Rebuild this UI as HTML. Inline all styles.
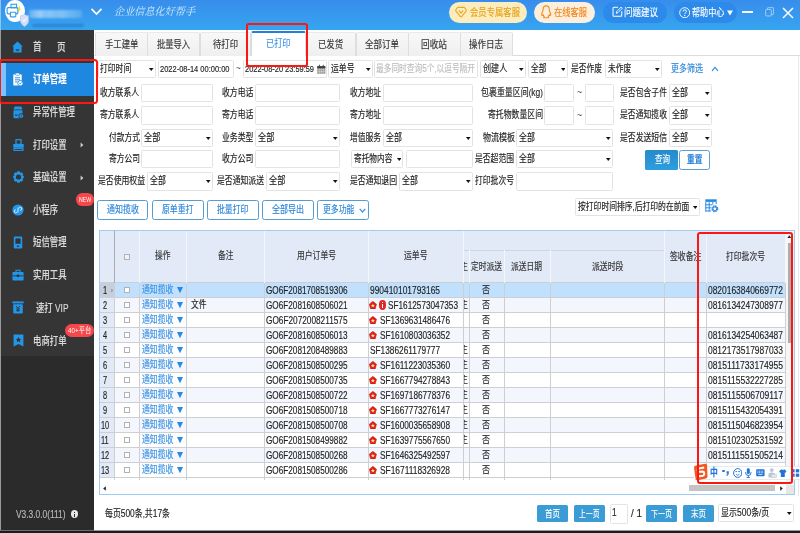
<!DOCTYPE html>
<html lang="zh-CN"><head><meta charset="utf-8"><title>订单管理 - 已打印</title>
<style>
html,body{margin:0;padding:0;}
body{width:800px;height:533px;overflow:hidden;position:relative;background:#fff;font-family:"Liberation Sans", "Noto Sans CJK SC", sans-serif;}
#app{position:absolute;left:0;top:0;width:800px;height:533px;overflow:hidden;}
#app div,#app span,#app svg{position:absolute;box-sizing:border-box;}
.t,.s{white-space:nowrap;transform-origin:0 50%;-webkit-text-stroke:0.15px currentColor;}
.s{font-family:"Liberation Serif","Noto Serif CJK SC",serif;font-style:italic;}
.in{background:#fff;border:1px solid #e3e3e3;border-radius:1.5px;}
</style></head>
<body><div id="app">
<div style="left:0px;top:0px;width:800px;height:29.5px;background:linear-gradient(#388dec,#36a5f0);"></div>
<div style="left:4.5px;top:-0.5px;width:20px;height:22.5px;background:#fff;border-radius:50%;"></div>
<svg style="left:6px;top:3px" width="16" height="15" viewBox="0 0 16 15"><rect x="5" y="1.3" width="5.6" height="3.4" fill="none" stroke="#319de8" stroke-width="1.1"/><rect x="1.1" y="4.7" width="10.8" height="6.2" rx="1.3" fill="none" stroke="#319de8" stroke-width="1.2"/><rect x="4.4" y="9.3" width="5.4" height="4.6" rx="0.6" fill="#fff" stroke="#319de8" stroke-width="1.1"/><path d="M13.2 3.2 L11.6 6.6 H13 L12.2 9.4 L14.8 5.6 H13.4 L14.2 3.2Z" fill="#f7cf2a"/></svg>
<svg style="left:19.5px;top:13.5px" width="9" height="13" viewBox="0 0 9 13"><path d="M4.5 0.4 Q6.6 1.8 8.6 1.8 V7.6 Q8.2 10.4 4.5 12.6 Q0.8 10.4 0.4 7.6 V1.8 Q2.4 1.8 4.5 0.4Z" fill="#d9dff6" stroke="#b9c4ee" stroke-width="0.7"/><path d="M2.6 5.8 L4 7.4 L6.6 4.2" fill="none" stroke="#f4f6fd" stroke-width="1.1"/></svg>
<div style="left:28.5px;top:9.5px;width:53px;height:8px;background:linear-gradient(90deg,#5fb0f2 0,#7cc0f6 8%,#8fc9f8 14%,#a3d2f9 22%,#86c5f7 30%,#92caf8 40%,#7fc1f6 52%,#8ac6f7 62%,#74bbf5 74%,#6ab6f4 86%,#55abf1 100%);filter:blur(0.9px);opacity:.92;"></div>
<div style="left:32px;top:24.3px;width:52px;height:3.2px;background:#2a7fd2;filter:blur(1.1px);border-radius:2px;opacity:.9;"></div>
<div style="left:0px;top:0px;width:1px;height:29.5px;background:#8ec6f5;"></div>
<svg style="left:90px;top:7px" width="13" height="9" viewBox="0 0 13 9"><path d="M1.5 1.8 L6.5 7 L11.5 1.8" fill="none" stroke="#fff" stroke-width="1.7"/></svg>
<span class="s" style="left:114px;top:3.62px;font-size:10.5px;line-height:15.75px;color:#d6e9fc;transform:scaleX(0.9643);-webkit-text-stroke:0;">企业信息化好帮手</span>
<div style="left:449px;top:1.7px;width:78.3px;height:21.2px;background:#fdedbe;border-radius:10.6px;"></div>
<svg style="left:454.5px;top:6px" width="12" height="12" viewBox="0 0 12 12"><path d="M3.2 1.4 H8.8 Q9.4 1.4 9.8 1.9 L11.2 4 Q11.5 4.6 11.1 5.1 L6.6 10.6 Q6 11.2 5.4 10.6 L0.9 5.1 Q0.5 4.6 0.8 4 L2.2 1.9 Q2.6 1.4 3.2 1.4Z" fill="none" stroke="#e9a820" stroke-width="1.1"/><path d="M3.9 4.4 L6 7 L8.1 4.4" fill="none" stroke="#e9a820" stroke-width="1.1"/></svg>
<span class="t" style="left:469.5px;top:4.5px;font-size:10px;line-height:15.0px;color:#e5a21c;transform:scaleX(0.8333);">会员专属客服</span>
<div style="left:534px;top:1.7px;width:61px;height:21.2px;background:#fdefde;border-radius:10.6px;"></div>
<svg style="left:541.3px;top:5.2px" width="10.4" height="13.6" viewBox="0 0 10.4 13.6"><path d="M5.2 0.8 C7.4 0.8 8.3 2.6 8.3 4.6 C8.3 5.8 8.6 6.4 9.2 7.6 C9.9 9 9.9 10.2 9.3 10.4 C8.9 10.5 8.5 10 8.3 9.6 C8.1 10.6 7.7 11.2 7.2 11.7 C7.9 12 8 12.8 7 12.8 H3.4 C2.4 12.8 2.5 12 3.2 11.7 C2.7 11.2 2.3 10.6 2.1 9.6 C1.9 10 1.5 10.5 1.1 10.4 C0.5 10.2 0.5 9 1.2 7.6 C1.8 6.4 2.1 5.8 2.1 4.6 C2.1 2.6 3 0.8 5.2 0.8Z" fill="none" stroke="#f5901e" stroke-width="1.15" stroke-linejoin="round"/></svg>
<span class="t" style="left:554px;top:4.5px;font-size:10px;line-height:15.0px;color:#f08418;transform:scaleX(0.8250);">在线客服</span>
<div style="left:603px;top:1.7px;width:64px;height:21.2px;background:#2b8aea;border-radius:10.6px;"></div>
<svg style="left:612px;top:6.4px" width="11.2" height="11.2" viewBox="0 0 11 11"><path d="M6 1.2 H2 Q1 1.2 1 2.2 V9 Q1 10 2 10 H8.6 Q9.6 10 9.6 9 V5.2" fill="none" stroke="#fff" stroke-width="1"/><path d="M4.2 7.2 L4.6 5.4 L9 1 L10.2 2.2 L5.8 6.6 Z" fill="none" stroke="#fff" stroke-width="0.9"/></svg>
<span class="t" style="left:624px;top:4.5px;font-size:10px;line-height:15.0px;color:#fff;transform:scaleX(0.8500);">问题建议</span>
<div style="left:674px;top:1.7px;width:63px;height:21.2px;background:#2b8aea;border-radius:10.6px;"></div>
<svg style="left:679px;top:6.6px" width="11.4" height="11.4" viewBox="0 0 11.4 11.4"><circle cx="5.7" cy="5.7" r="5" fill="none" stroke="#fff" stroke-width="0.95"/><path d="M4 4.5 Q4 2.9 5.7 2.9 Q7.4 2.9 7.4 4.4 Q7.4 5.3 6.4 5.9 Q5.7 6.3 5.7 7.2" fill="none" stroke="#fff" stroke-width="1"/><rect x="5.2" y="8" width="1" height="1.1" fill="#fff"/></svg>
<span class="t" style="left:692px;top:4.5px;font-size:10px;line-height:15.0px;color:#fff;transform:scaleX(0.8125);">帮助中心</span>
<svg style="left:727px;top:9.5px" width="6" height="6" viewBox="0 0 6 6"><path d="M0 0.5 H6 L3 5.5Z" fill="#fff"/></svg>
<div style="left:742px;top:11.3px;width:11px;height:1.5px;background:#f4f9ff;"></div>
<svg style="left:764.8px;top:7.2px" width="9.4" height="9.8" viewBox="0 0 11 12" preserveAspectRatio="none"><rect x="0.8" y="3" width="6.6" height="8" rx="0.8" fill="none" stroke="#bcdcf9" stroke-width="0.9"/><path d="M3 3 V1.3 Q3 0.8 3.6 0.8 H9.4 Q10 0.8 10 1.3 V8.4 Q10 9 9.4 9 H7.6" fill="none" stroke="#bcdcf9" stroke-width="0.9"/></svg>
<svg style="left:782px;top:6.5px" width="12" height="12" viewBox="0 0 12 12"><path d="M1 1 L11 11 M11 1 L1 11" stroke="#fff" stroke-width="1.5"/></svg>
<div style="left:0px;top:29.5px;width:94.2px;height:501.5px;background:#353535;"></div>
<div style="left:0px;top:355.5px;width:94.2px;height:176px;background:#2b2b2b;"></div>
<div style="left:0px;top:29.5px;width:1px;height:501.5px;background:#9a9a9a;"></div>
<div style="left:1px;top:62.5px;width:93.2px;height:33px;background:#1e88e1;"></div>
<div style="left:1px;top:62.5px;width:4.6px;height:33px;background:#7cc4fd;"></div>
<svg style="left:12px;top:41px" width="11" height="12" viewBox="0 0 11 12"><path d="M5.5 0.6 L10.8 5.4 H9.6 V11.4 H1.4 V5.4 H0.2Z" fill="#2297ea"/><rect x="3.8" y="8.4" width="3.4" height="1.3" fill="#333"/></svg>
<span class="t" style="left:33px;top:38.75px;font-size:11px;line-height:16.5px;color:#dadada;font-weight:500;transform:scaleX(0.7800);">首</span>
<span class="t" style="left:56.5px;top:38.75px;font-size:11px;line-height:16.5px;color:#dadada;font-weight:500;transform:scaleX(0.7800);">页</span>
<svg style="left:12.5px;top:73px" width="10" height="13" viewBox="0 0 10 13"><rect x="0.3" y="1.2" width="8.4" height="11.4" rx="1.2" fill="#fff"/><rect x="2.6" y="0.1" width="3.8" height="2.2" rx="0.6" fill="#fff" stroke="#1e88e1" stroke-width="0.6"/><path d="M2 4.8 H7 M2 6.8 H7 M2 8.8 H4.6" stroke="#1e88e1" stroke-width="0.9"/><circle cx="7.4" cy="10.2" r="2.9" fill="#1e88e1"/><circle cx="7.4" cy="10.2" r="2.2" fill="#fff"/><path d="M6.3 10.2 L7.1 11 L8.5 9.4" stroke="#1e88e1" stroke-width="0.8" fill="none"/></svg>
<span class="t" style="left:33px;top:71.25px;font-size:11px;line-height:16.5px;color:#fff;font-weight:700;transform:scaleX(0.7614);">订单管理</span>
<svg style="left:12.5px;top:106px" width="11" height="13" viewBox="0 0 11 13"><path d="M0.5 3.4 L1.6 0.6 H8.4 L9.5 3.4Z" fill="#2297ea"/><rect x="0.5" y="4.2" width="9" height="8" rx="0.8" fill="#2297ea"/><rect x="2" y="8.2" width="2.6" height="1.8" fill="#333" opacity=".6"/><circle cx="8.2" cy="10" r="2.8" fill="#333"/><circle cx="8.2" cy="10" r="2.1" fill="#2297ea"/><rect x="7.8" y="8.6" width="0.8" height="1.7" fill="#333"/><rect x="7.8" y="10.7" width="0.8" height="0.7" fill="#333"/></svg>
<span class="t" style="left:33px;top:103.75px;font-size:11px;line-height:16.5px;color:#dadada;font-weight:500;transform:scaleX(0.7636);">异常件管理</span>
<svg style="left:12.5px;top:139px" width="11" height="12" viewBox="0 0 11 12"><rect x="3" y="0.7" width="5" height="4.6" fill="none" stroke="#2297ea" stroke-width="1.2"/><rect x="0.2" y="5" width="10.6" height="3.8" rx="0.7" fill="#2297ea"/><rect x="1" y="9.4" width="9" height="2" fill="none" stroke="#2297ea" stroke-width="1.1"/></svg>
<span class="t" style="left:33px;top:136.75px;font-size:11px;line-height:16.5px;color:#dadada;font-weight:500;transform:scaleX(0.7614);">打印设置</span>
<svg style="left:80px;top:142px" width="4" height="6" viewBox="0 0 4 6"><path d="M0.6 0.4 L3.4 3 L0.6 5.6Z" fill="#cfcfcf"/></svg>
<svg style="left:12.5px;top:171px" width="11" height="12" viewBox="0 0 11 12"><path d="M4.3 0.3 H6.7 L7.1 1.8 L8.6 1.2 L10.3 3 L9.5 4.4 L10.8 5 V7 L9.5 7.6 L10.3 9 L8.6 10.8 L7.1 10.2 L6.7 11.7 H4.3 L3.9 10.2 L2.4 10.8 L0.7 9 L1.5 7.6 L0.2 7 V5 L1.5 4.4 L0.7 3 L2.4 1.2 L3.9 1.8Z" fill="#2297ea"/><circle cx="5.5" cy="6" r="2.6" fill="#353535"/></svg>
<span class="t" style="left:33px;top:169.25px;font-size:11px;line-height:16.5px;color:#dadada;font-weight:500;transform:scaleX(0.7614);">基础设置</span>
<svg style="left:80px;top:174.5px" width="4" height="6" viewBox="0 0 4 6"><path d="M0.6 0.4 L3.4 3 L0.6 5.6Z" fill="#cfcfcf"/></svg>
<svg style="left:11.5px;top:204px" width="12" height="12" viewBox="0 0 12 12"><circle cx="6" cy="6" r="5.6" fill="#2297ea"/><path d="M5.2 7.6 A1.5 1.5 0 1 1 3.8 5.8 M6.8 4.4 A1.5 1.5 0 1 1 8.2 6.2 M6 3.6 V8.4" stroke="#e3f2fd" stroke-width="1" fill="none" opacity=".95"/></svg>
<span class="t" style="left:33px;top:201.75px;font-size:11px;line-height:16.5px;color:#dadada;font-weight:500;transform:scaleX(0.7576);">小程序</span>
<div style="left:76px;top:193.3px;width:17.8px;height:12.5px;background:#f8474a;border-radius:6.3px;"></div>
<span class="t" style="left:79px;top:194.1px;font-size:8px;line-height:12.0px;color:#fff;transform:scaleX(0.6427);-webkit-text-stroke:0;">NEW</span>
<svg style="left:13px;top:236px" width="10" height="13" viewBox="0 0 10 13"><rect x="0.8" y="0.5" width="8.4" height="12" rx="1.2" fill="#2297ea"/><rect x="2.4" y="2.4" width="5.2" height="5.4" fill="#333"/><rect x="3.8" y="9.6" width="2.4" height="1.2" fill="#333"/></svg>
<span class="t" style="left:33px;top:234.25px;font-size:11px;line-height:16.5px;color:#dadada;font-weight:500;transform:scaleX(0.7614);">短信管理</span>
<svg style="left:12px;top:268.5px" width="12" height="12" viewBox="0 0 12 12"><rect x="0.4" y="3" width="11.2" height="8.4" rx="1" fill="#2297ea"/><path d="M4 3 V1.2 H8 V3" fill="none" stroke="#2297ea" stroke-width="1.1"/><rect x="0.4" y="6.4" width="11.2" height="0.9" fill="#333"/><rect x="4.8" y="5.6" width="2.4" height="2.4" fill="#333"/></svg>
<span class="t" style="left:33px;top:267.35px;font-size:11px;line-height:16.5px;color:#dadada;font-weight:500;transform:scaleX(0.7614);">实用工具</span>
<svg style="left:12px;top:301px" width="12" height="13" viewBox="0 0 12 13"><rect x="0.4" y="0.4" width="11.2" height="2" fill="#2297ea"/><rect x="1.2" y="3.2" width="9.6" height="9.2" rx="0.8" fill="#2297ea"/><path d="M4 5 L6 7.4 L8 5 M6 7.4 V10.8 M4.2 8 H7.8 M4.2 9.6 H7.8" stroke="#333" stroke-width="0.9" fill="none"/></svg>
<span class="t" style="left:36px;top:299.95px;font-size:11px;line-height:16.5px;color:#dadada;font-weight:500;transform:scaleX(0.7594);">速打 VIP</span>
<svg style="left:12.5px;top:333.8px" width="11" height="13" viewBox="0 0 11 13"><path d="M0.6 0.5 H10.4 V12.4 L5.5 10 L0.6 12.4Z" fill="#2297ea"/><path d="M5.5 3 L6.3 4.8 L8.2 5 L6.8 6.3 L7.2 8.2 L5.5 7.2 L3.8 8.2 L4.2 6.3 L2.8 5 L4.7 4.8Z" fill="#333"/></svg>
<span class="t" style="left:33px;top:332.75px;font-size:11px;line-height:16.5px;color:#dadada;font-weight:500;transform:scaleX(0.7614);">电商打单</span>
<div style="left:65px;top:323.5px;width:28.9px;height:13.2px;background:#f8474a;border-radius:6.6px;"></div>
<span class="t" style="left:67.8px;top:324.9px;font-size:7.6px;line-height:11.4px;color:#fff;transform:scaleX(0.8263);-webkit-text-stroke:0;">40+平台</span>
<span class="t" style="left:16px;top:507.27px;font-size:10.3px;line-height:15.45px;color:#b8b8b8;transform:scaleX(0.8131);">V3.3.0.0(111)</span>
<div style="left:71px;top:510.4px;width:7.4px;height:7.8px;background:#e6e6e6;border-radius:50%;"></div>
<div style="left:74.1px;top:511.8px;width:1.3px;height:1.3px;background:#2b2b2b;"></div>
<div style="left:74.1px;top:513.7px;width:1.3px;height:3.2px;background:#2b2b2b;"></div>
<div style="left:94.2px;top:29.5px;width:705.8px;height:26.5px;background:#fff;border-bottom:1px solid #dcdcdc;"></div>
<div style="left:95px;top:31.5px;width:52.5px;height:24.5px;background:linear-gradient(#f8f8f8,#efefef);border:1px solid #dedede;border-top-color:#e9e9e9;border-bottom:none;border-radius:2px 2px 0 0;"></div>
<span class="t" style="left:104.5px;top:36.73px;font-size:10.5px;line-height:15.75px;color:#333;transform:scaleX(0.7976);">手工建单</span>
<div style="left:147px;top:31.5px;width:53.0px;height:24.5px;background:linear-gradient(#f8f8f8,#efefef);border:1px solid #dedede;border-top-color:#e9e9e9;border-bottom:none;border-radius:2px 2px 0 0;"></div>
<span class="t" style="left:157px;top:36.73px;font-size:10.5px;line-height:15.75px;color:#333;transform:scaleX(0.7857);">批量导入</span>
<div style="left:199.5px;top:31.5px;width:51.0px;height:24.5px;background:linear-gradient(#f8f8f8,#efefef);border:1px solid #dedede;border-top-color:#e9e9e9;border-bottom:none;border-radius:2px 2px 0 0;"></div>
<span class="t" style="left:213px;top:36.73px;font-size:10.5px;line-height:15.75px;color:#333;transform:scaleX(0.7937);">待打印</span>
<div style="left:250.5px;top:31px;width:55px;height:25.2px;background:#fff;border:1px solid #dcdcdc;border-bottom:none;border-top:2.8px solid #2381dc;border-radius:2px 2px 0 0;"></div>
<span class="t" style="left:265.5px;top:35.62px;font-size:10.5px;line-height:15.75px;color:#3b93e6;transform:scaleX(0.7778);">已打印</span>
<div style="left:305px;top:31.5px;width:51.0px;height:24.5px;background:linear-gradient(#f8f8f8,#efefef);border:1px solid #dedede;border-top-color:#e9e9e9;border-bottom:none;border-radius:2px 2px 0 0;"></div>
<span class="t" style="left:317.5px;top:36.73px;font-size:10.5px;line-height:15.75px;color:#333;transform:scaleX(0.7937);">已发货</span>
<div style="left:355.5px;top:31.5px;width:53.0px;height:24.5px;background:linear-gradient(#f8f8f8,#efefef);border:1px solid #dedede;border-top-color:#e9e9e9;border-bottom:none;border-radius:2px 2px 0 0;"></div>
<span class="t" style="left:365px;top:36.73px;font-size:10.5px;line-height:15.75px;color:#333;transform:scaleX(0.8095);">全部订单</span>
<div style="left:408px;top:31.5px;width:52.5px;height:24.5px;background:linear-gradient(#f8f8f8,#efefef);border:1px solid #dedede;border-top-color:#e9e9e9;border-bottom:none;border-radius:2px 2px 0 0;"></div>
<span class="t" style="left:421px;top:36.73px;font-size:10.5px;line-height:15.75px;color:#333;transform:scaleX(0.8254);">回收站</span>
<div style="left:460px;top:31.5px;width:53.0px;height:24.5px;background:linear-gradient(#f8f8f8,#efefef);border:1px solid #dedede;border-top-color:#e9e9e9;border-bottom:none;border-radius:2px 2px 0 0;"></div>
<span class="t" style="left:469px;top:36.73px;font-size:10.5px;line-height:15.75px;color:#333;transform:scaleX(0.8095);">操作日志</span>
<div style="left:797.5px;top:56px;width:1px;height:440px;background:#e9e9e9;"></div>
<div class="in" style="left:98px;top:60px;width:58px;height:18px;"></div>
<span class="t" style="left:99.8px;top:61.85px;font-size:9.8px;line-height:14.7px;color:#222;transform:scaleX(0.7962);">打印时间</span>
<svg style="left:149.0px;top:67.89999999999999px" width="4.5" height="2.8" viewBox="0 0 5 3"><path d="M0.2 0 H4.8 L2.5 3Z" fill="#111" stroke="#111" stroke-width="0.4" stroke-linejoin="round"/></svg>
<div class="in" style="left:158px;top:60px;width:76px;height:18px;"></div>
<span class="t" style="left:159.5px;top:62.3px;font-size:9.6px;line-height:14.4px;color:#222;transform:scaleX(0.7801);">2022-08-14 00:00:00</span>
<span class="t" style="left:236.2px;top:61.27px;font-size:10.3px;line-height:15.45px;color:#555;transform:scaleX(0.8000);-webkit-text-stroke:0;">~</span>
<div class="in" style="left:243px;top:60px;width:83.5px;height:18px;"></div>
<span class="t" style="left:244.5px;top:62.3px;font-size:9.6px;line-height:14.4px;color:#222;transform:scaleX(0.7745);">2022-08-20 23:59:59</span>
<svg style="left:317.3px;top:63.6px" width="8.6" height="10.6" viewBox="0 0 8.6 10.6"><rect x="0.3" y="2.2" width="8" height="8.2" fill="#8e8e8e"/><rect x="0.3" y="2.2" width="8" height="2" fill="#3a3a3a"/><path d="M2.4 0.2 L3.2 2.6 H1.6Z M6.2 0.2 L7 2.6 H5.4Z" fill="#3a3a3a"/><path d="M0.6 5.8 H8 M0.6 7.5 H8 M0.6 9.2 H8 M2.3 4.4 V10.4 M4.3 4.4 V10.4 M6.3 4.4 V10.4" stroke="#dcdcdc" stroke-width="0.55"/></svg>
<div class="in" style="left:328px;top:60px;width:45px;height:18px;"></div>
<span class="t" style="left:330.7px;top:61.85px;font-size:9.8px;line-height:14.7px;color:#222;transform:scaleX(0.7996);">运单号</span>
<svg style="left:366.0px;top:67.89999999999999px" width="4.5" height="2.8" viewBox="0 0 5 3"><path d="M0.2 0 H4.8 L2.5 3Z" fill="#111" stroke="#111" stroke-width="0.4" stroke-linejoin="round"/></svg>
<div class="in" style="left:374px;top:60px;width:104px;height:18px;"></div>
<span class="t" style="left:376px;top:61.85px;font-size:9.8px;line-height:14.7px;color:#bdbdbd;transform:scaleX(0.7849);">最多同时查询<span style="position:static;font-size:1.07em">5</span>个,以逗号隔开</span>
<div class="in" style="left:480px;top:60px;width:46px;height:18px;"></div>
<span class="t" style="left:482.7px;top:61.85px;font-size:9.8px;line-height:14.7px;color:#222;transform:scaleX(0.8268);">创建人</span>
<svg style="left:519.0px;top:67.89999999999999px" width="4.5" height="2.8" viewBox="0 0 5 3"><path d="M0.2 0 H4.8 L2.5 3Z" fill="#111" stroke="#111" stroke-width="0.4" stroke-linejoin="round"/></svg>
<div class="in" style="left:528px;top:60px;width:39.5px;height:18px;"></div>
<span class="t" style="left:530.7px;top:61.85px;font-size:9.8px;line-height:14.7px;color:#222;transform:scaleX(0.7809);">全部</span>
<svg style="left:560.5px;top:67.89999999999999px" width="4.5" height="2.8" viewBox="0 0 5 3"><path d="M0.2 0 H4.8 L2.5 3Z" fill="#111" stroke="#111" stroke-width="0.4" stroke-linejoin="round"/></svg>
<span class="t" style="left:571px;top:61.85px;font-size:9.8px;line-height:14.7px;color:#222;transform:scaleX(0.7911);">是否作废</span>
<div class="in" style="left:605px;top:60px;width:57px;height:18px;"></div>
<span class="t" style="left:607.7px;top:61.85px;font-size:9.8px;line-height:14.7px;color:#222;transform:scaleX(0.7928);">未作废</span>
<svg style="left:655.0px;top:67.89999999999999px" width="4.5" height="2.8" viewBox="0 0 5 3"><path d="M0.2 0 H4.8 L2.5 3Z" fill="#111" stroke="#111" stroke-width="0.4" stroke-linejoin="round"/></svg>
<span class="t" style="left:671px;top:61.85px;font-size:9.8px;line-height:14.7px;color:#2b86d9;transform:scaleX(0.8166);">更多筛选</span>
<svg style="left:710.5px;top:66px" width="8" height="6" viewBox="0 0 8 6"><path d="M1 4.8 L4 1.4 L7 4.8" fill="none" stroke="#2b86d9" stroke-width="1.1"/></svg>
<span class="t" style="left:100px;top:85.85px;font-size:9.8px;line-height:14.7px;color:#222;transform:scaleX(0.7962);">收方联系人</span>
<div class="in" style="left:141px;top:84px;width:72px;height:18px;"></div>
<span class="t" style="left:222px;top:85.85px;font-size:9.8px;line-height:14.7px;color:#222;transform:scaleX(0.8038);">收方电话</span>
<div class="in" style="left:255px;top:84px;width:85px;height:18px;"></div>
<span class="t" style="left:350px;top:85.85px;font-size:9.8px;line-height:14.7px;color:#222;transform:scaleX(0.7911);">收方地址</span>
<div class="in" style="left:383px;top:84px;width:90px;height:18px;"></div>
<span class="t" style="left:480.5px;top:85.85px;font-size:9.8px;line-height:14.7px;color:#222;transform:scaleX(0.8118);">包裹重量区间(<span style="position:static;font-size:1.07em">kg</span>)</span>
<div class="in" style="left:544px;top:84px;width:30px;height:18px;"></div>
<span class="t" style="left:577px;top:85.48px;font-size:10.3px;line-height:15.45px;color:#555;transform:scaleX(0.8500);-webkit-text-stroke:0;">~</span>
<div class="in" style="left:585px;top:84px;width:29px;height:18px;"></div>
<span class="t" style="left:620px;top:85.85px;font-size:9.8px;line-height:14.7px;color:#222;transform:scaleX(0.7996);">是否包含子件</span>
<div class="in" style="left:669px;top:84px;width:43px;height:18px;"></div>
<span class="t" style="left:671.7px;top:85.85px;font-size:9.8px;line-height:14.7px;color:#222;transform:scaleX(0.8064);">全部</span>
<svg style="left:705.0px;top:91.89999999999999px" width="4.5" height="2.8" viewBox="0 0 5 3"><path d="M0.2 0 H4.8 L2.5 3Z" fill="#111" stroke="#111" stroke-width="0.4" stroke-linejoin="round"/></svg>
<span class="t" style="left:100px;top:108.35px;font-size:9.8px;line-height:14.7px;color:#222;transform:scaleX(0.7962);">寄方联系人</span>
<div class="in" style="left:141px;top:106px;width:72px;height:19px;"></div>
<span class="t" style="left:222px;top:108.35px;font-size:9.8px;line-height:14.7px;color:#222;transform:scaleX(0.8038);">寄方电话</span>
<div class="in" style="left:255px;top:106px;width:85px;height:19px;"></div>
<span class="t" style="left:350px;top:108.35px;font-size:9.8px;line-height:14.7px;color:#222;transform:scaleX(0.7911);">寄方地址</span>
<div class="in" style="left:383px;top:106px;width:90px;height:19px;"></div>
<span class="t" style="left:487.5px;top:108.35px;font-size:9.8px;line-height:14.7px;color:#222;transform:scaleX(0.8020);">寄托物数量区间</span>
<div class="in" style="left:544px;top:106px;width:30px;height:19px;"></div>
<span class="t" style="left:577px;top:107.98px;font-size:10.3px;line-height:15.45px;color:#555;transform:scaleX(0.8500);-webkit-text-stroke:0;">~</span>
<div class="in" style="left:585px;top:106px;width:29px;height:19px;"></div>
<span class="t" style="left:620px;top:108.35px;font-size:9.8px;line-height:14.7px;color:#222;transform:scaleX(0.7996);">是否通知揽收</span>
<div class="in" style="left:669px;top:106px;width:43px;height:19px;"></div>
<span class="t" style="left:671.7px;top:108.35px;font-size:9.8px;line-height:14.7px;color:#222;transform:scaleX(0.8064);">全部</span>
<svg style="left:705.0px;top:114.39999999999999px" width="4.5" height="2.8" viewBox="0 0 5 3"><path d="M0.2 0 H4.8 L2.5 3Z" fill="#111" stroke="#111" stroke-width="0.4" stroke-linejoin="round"/></svg>
<span class="t" style="left:108.5px;top:130.85px;font-size:9.8px;line-height:14.7px;color:#222;transform:scaleX(0.7911);">付款方式</span>
<div class="in" style="left:141px;top:129px;width:72px;height:18px;"></div>
<span class="t" style="left:143.7px;top:130.85px;font-size:9.8px;line-height:14.7px;color:#222;transform:scaleX(0.8319);">全部</span>
<svg style="left:206.0px;top:136.9px" width="4.5" height="2.8" viewBox="0 0 5 3"><path d="M0.2 0 H4.8 L2.5 3Z" fill="#111" stroke="#111" stroke-width="0.4" stroke-linejoin="round"/></svg>
<span class="t" style="left:222px;top:130.85px;font-size:9.8px;line-height:14.7px;color:#222;transform:scaleX(0.8038);">业务类型</span>
<div class="in" style="left:255px;top:129px;width:85px;height:18px;"></div>
<span class="t" style="left:257.7px;top:130.85px;font-size:9.8px;line-height:14.7px;color:#222;transform:scaleX(0.8319);">全部</span>
<svg style="left:333.0px;top:136.9px" width="4.5" height="2.8" viewBox="0 0 5 3"><path d="M0.2 0 H4.8 L2.5 3Z" fill="#111" stroke="#111" stroke-width="0.4" stroke-linejoin="round"/></svg>
<span class="t" style="left:350px;top:130.85px;font-size:9.8px;line-height:14.7px;color:#222;transform:scaleX(0.7911);">增值服务</span>
<div class="in" style="left:383px;top:129px;width:90px;height:18px;"></div>
<span class="t" style="left:385.7px;top:130.85px;font-size:9.8px;line-height:14.7px;color:#222;transform:scaleX(0.8064);">全部</span>
<svg style="left:466.0px;top:136.9px" width="4.5" height="2.8" viewBox="0 0 5 3"><path d="M0.2 0 H4.8 L2.5 3Z" fill="#111" stroke="#111" stroke-width="0.4" stroke-linejoin="round"/></svg>
<span class="t" style="left:482.5px;top:130.85px;font-size:9.8px;line-height:14.7px;color:#222;transform:scaleX(0.8166);">物流模板</span>
<div class="in" style="left:516px;top:129px;width:97px;height:18px;"></div>
<span class="t" style="left:518.7px;top:130.85px;font-size:9.8px;line-height:14.7px;color:#222;transform:scaleX(0.8064);">全部</span>
<svg style="left:606.0px;top:136.9px" width="4.5" height="2.8" viewBox="0 0 5 3"><path d="M0.2 0 H4.8 L2.5 3Z" fill="#111" stroke="#111" stroke-width="0.4" stroke-linejoin="round"/></svg>
<span class="t" style="left:620px;top:130.85px;font-size:9.8px;line-height:14.7px;color:#222;transform:scaleX(0.7996);">是否发送短信</span>
<div class="in" style="left:669px;top:129px;width:43px;height:18px;"></div>
<span class="t" style="left:671.7px;top:130.85px;font-size:9.8px;line-height:14.7px;color:#222;transform:scaleX(0.8064);">全部</span>
<svg style="left:705.0px;top:136.9px" width="4.5" height="2.8" viewBox="0 0 5 3"><path d="M0.2 0 H4.8 L2.5 3Z" fill="#111" stroke="#111" stroke-width="0.4" stroke-linejoin="round"/></svg>
<span class="t" style="left:108.5px;top:151.85px;font-size:9.8px;line-height:14.7px;color:#222;transform:scaleX(0.7911);">寄方公司</span>
<div class="in" style="left:141px;top:150px;width:72px;height:18px;"></div>
<span class="t" style="left:222px;top:151.85px;font-size:9.8px;line-height:14.7px;color:#222;transform:scaleX(0.8038);">收方公司</span>
<div class="in" style="left:255px;top:150px;width:85px;height:18px;"></div>
<div class="in" style="left:351px;top:150px;width:52px;height:18px;"></div>
<span class="t" style="left:353.7px;top:151.85px;font-size:9.8px;line-height:14.7px;color:#222;transform:scaleX(0.7819);">寄托物内容</span>
<svg style="left:396.8px;top:157.9px" width="4.5" height="2.8" viewBox="0 0 5 3"><path d="M0.2 0 H4.8 L2.5 3Z" fill="#111" stroke="#111" stroke-width="0.4" stroke-linejoin="round"/></svg>
<div class="in" style="left:406px;top:150px;width:67px;height:18px;"></div>
<span class="t" style="left:475px;top:151.85px;font-size:9.8px;line-height:14.7px;color:#222;transform:scaleX(0.7962);">是否超范围</span>
<div class="in" style="left:516px;top:150px;width:97px;height:18px;"></div>
<span class="t" style="left:518.7px;top:151.85px;font-size:9.8px;line-height:14.7px;color:#222;transform:scaleX(0.8064);">全部</span>
<svg style="left:606.0px;top:157.9px" width="4.5" height="2.8" viewBox="0 0 5 3"><path d="M0.2 0 H4.8 L2.5 3Z" fill="#111" stroke="#111" stroke-width="0.4" stroke-linejoin="round"/></svg>
<div style="left:645px;top:150px;width:33px;height:19.5px;background:linear-gradient(#2889c9,#2c9fe0);border-radius:1.5px;"></div>
<span class="t" style="left:655px;top:152.65px;font-size:9.8px;line-height:14.7px;color:#fff;transform:scaleX(0.7656);">查询</span>
<div style="left:679px;top:150px;width:31px;height:19.5px;background:#fff;border:1.6px solid #5a9fcf;border-radius:2.5px;"></div>
<span class="t" style="left:687.2px;top:152.65px;font-size:9.8px;line-height:14.7px;color:#2b86d9;font-weight:700;transform:scaleX(0.7860);">重置</span>
<span class="t" style="left:98px;top:174.25px;font-size:9.8px;line-height:14.7px;color:#222;transform:scaleX(0.7996);">是否使用权益</span>
<div class="in" style="left:147px;top:172px;width:66px;height:19px;"></div>
<span class="t" style="left:149.7px;top:174.35px;font-size:9.8px;line-height:14.7px;color:#222;transform:scaleX(0.8064);">全部</span>
<svg style="left:206.0px;top:180.4px" width="4.5" height="2.8" viewBox="0 0 5 3"><path d="M0.2 0 H4.8 L2.5 3Z" fill="#111" stroke="#111" stroke-width="0.4" stroke-linejoin="round"/></svg>
<span class="t" style="left:217px;top:174.25px;font-size:9.8px;line-height:14.7px;color:#222;transform:scaleX(0.7996);">是否通知派送</span>
<div class="in" style="left:266px;top:172px;width:74px;height:19px;"></div>
<span class="t" style="left:268.7px;top:174.35px;font-size:9.8px;line-height:14.7px;color:#222;transform:scaleX(0.8319);">全部</span>
<svg style="left:333.0px;top:180.4px" width="4.5" height="2.8" viewBox="0 0 5 3"><path d="M0.2 0 H4.8 L2.5 3Z" fill="#111" stroke="#111" stroke-width="0.4" stroke-linejoin="round"/></svg>
<span class="t" style="left:350px;top:174.25px;font-size:9.8px;line-height:14.7px;color:#222;transform:scaleX(0.7996);">是否通知退回</span>
<div class="in" style="left:399px;top:172px;width:74px;height:19px;"></div>
<span class="t" style="left:401.7px;top:174.35px;font-size:9.8px;line-height:14.7px;color:#222;transform:scaleX(0.8064);">全部</span>
<svg style="left:466.0px;top:180.4px" width="4.5" height="2.8" viewBox="0 0 5 3"><path d="M0.2 0 H4.8 L2.5 3Z" fill="#111" stroke="#111" stroke-width="0.4" stroke-linejoin="round"/></svg>
<span class="t" style="left:475px;top:174.25px;font-size:9.8px;line-height:14.7px;color:#222;transform:scaleX(0.7962);">打印批次号</span>
<div class="in" style="left:516px;top:172px;width:97px;height:19px;"></div>
<div style="left:96.5px;top:200px;width:51.5px;height:20px;background:#fff;border:1.4px solid #559cd2;border-radius:2.5px;"></div>
<span class="t" style="left:106.5px;top:202.85px;font-size:9.8px;line-height:14.7px;color:#2b86d9;transform:scaleX(0.8166);">通知揽收</span>
<div style="left:151.5px;top:200px;width:52.0px;height:20px;background:#fff;border:1.4px solid #559cd2;border-radius:2.5px;"></div>
<span class="t" style="left:161.5px;top:202.85px;font-size:9.8px;line-height:14.7px;color:#2b86d9;transform:scaleX(0.8038);">原单重打</span>
<div style="left:207px;top:200px;width:51.5px;height:20px;background:#fff;border:1.4px solid #559cd2;border-radius:2.5px;"></div>
<span class="t" style="left:217px;top:202.85px;font-size:9.8px;line-height:14.7px;color:#2b86d9;transform:scaleX(0.8038);">批量打印</span>
<div style="left:262px;top:200px;width:52px;height:20px;background:#fff;border:1.4px solid #559cd2;border-radius:2.5px;"></div>
<span class="t" style="left:272px;top:202.85px;font-size:9.8px;line-height:14.7px;color:#2b86d9;transform:scaleX(0.8166);">全部导出</span>
<div style="left:317px;top:200px;width:52px;height:20px;background:#fff;border:1.4px solid #559cd2;border-radius:2.5px;"></div>
<span class="t" style="left:322.5px;top:202.85px;font-size:9.8px;line-height:14.7px;color:#2b86d9;transform:scaleX(0.8038);">更多功能</span>
<svg style="left:358.7px;top:207.8px" width="7" height="5" viewBox="0 0 7 5"><path d="M0.7 0.8 L3.5 4 L6.3 0.8" fill="none" stroke="#3b93e6" stroke-width="1.25"/></svg>
<div class="in" style="left:575px;top:198px;width:125px;height:18px;"></div>
<span class="t" style="left:577.7px;top:199.85px;font-size:9.8px;line-height:14.7px;color:#222;transform:scaleX(0.7956);">按打印时间排序,后打印的在前面</span>
<svg style="left:692.8px;top:205.9px" width="4.5" height="2.8" viewBox="0 0 5 3"><path d="M0.2 0 H4.8 L2.5 3Z" fill="#111" stroke="#111" stroke-width="0.4" stroke-linejoin="round"/></svg>
<svg style="left:705px;top:198.7px" width="14" height="14" viewBox="0 0 14 14"><rect x="0.3" y="0.3" width="11.4" height="2.6" fill="#2a8ae0"/><path d="M0.8 3 V12.4 M4.2 3 V12.4 M0.3 5.8 H7.4 M0.3 8.8 H6 M0.3 12 H6 M7.8 3 V5.4 M11.2 3 V5" stroke="#2a8ae0" stroke-width="1"/><circle cx="9.8" cy="9.8" r="2.6" fill="none" stroke="#2a8ae0" stroke-width="1.8" stroke-dasharray="1.4 0.65"/><circle cx="9.8" cy="9.8" r="1.9" fill="none" stroke="#2a8ae0" stroke-width="1"/></svg>
<div style="left:99px;top:230px;width:696px;height:265px;background:#fff;border:1px solid #9ecbf3;"></div>
<div style="left:100px;top:231px;width:694px;height:51.5px;background:#e2eaf8;"></div>
<div style="left:100px;top:282.5px;width:685.5px;height:15px;background:#c1e0fd;"></div>
<div style="left:100px;top:282.5px;width:14.5px;height:15px;background:#c6cfdb;"></div>
<div style="left:100px;top:297.5px;width:685.5px;height:15px;background:#f3f6fc;"></div>
<div style="left:100px;top:297.5px;width:14.5px;height:15px;background:#e2eaf8;"></div>
<div style="left:100px;top:312.5px;width:14.5px;height:15px;background:#e2eaf8;"></div>
<div style="left:100px;top:327.5px;width:685.5px;height:15px;background:#f3f6fc;"></div>
<div style="left:100px;top:327.5px;width:14.5px;height:15px;background:#e2eaf8;"></div>
<div style="left:100px;top:342.5px;width:14.5px;height:15px;background:#e2eaf8;"></div>
<div style="left:100px;top:357.5px;width:685.5px;height:15px;background:#f3f6fc;"></div>
<div style="left:100px;top:357.5px;width:14.5px;height:15px;background:#e2eaf8;"></div>
<div style="left:100px;top:372.5px;width:14.5px;height:15px;background:#e2eaf8;"></div>
<div style="left:100px;top:387.5px;width:685.5px;height:15px;background:#f3f6fc;"></div>
<div style="left:100px;top:387.5px;width:14.5px;height:15px;background:#e2eaf8;"></div>
<div style="left:100px;top:402.5px;width:14.5px;height:15px;background:#e2eaf8;"></div>
<div style="left:100px;top:417.5px;width:685.5px;height:15px;background:#f3f6fc;"></div>
<div style="left:100px;top:417.5px;width:14.5px;height:15px;background:#e2eaf8;"></div>
<div style="left:100px;top:432.5px;width:14.5px;height:15px;background:#e2eaf8;"></div>
<div style="left:100px;top:447.5px;width:685.5px;height:15px;background:#f3f6fc;"></div>
<div style="left:100px;top:447.5px;width:14.5px;height:15px;background:#e2eaf8;"></div>
<div style="left:100px;top:462.5px;width:14.5px;height:15px;background:#e2eaf8;"></div>
<div style="left:100px;top:282.0px;width:685.5px;height:1px;background:#cdcfd2;"></div>
<div style="left:100px;top:297.0px;width:685.5px;height:1px;background:#cdcfd2;"></div>
<div style="left:100px;top:312.0px;width:685.5px;height:1px;background:#cdcfd2;"></div>
<div style="left:100px;top:327.0px;width:685.5px;height:1px;background:#cdcfd2;"></div>
<div style="left:100px;top:342.0px;width:685.5px;height:1px;background:#cdcfd2;"></div>
<div style="left:100px;top:357.0px;width:685.5px;height:1px;background:#cdcfd2;"></div>
<div style="left:100px;top:372.0px;width:685.5px;height:1px;background:#cdcfd2;"></div>
<div style="left:100px;top:387.0px;width:685.5px;height:1px;background:#cdcfd2;"></div>
<div style="left:100px;top:402.0px;width:685.5px;height:1px;background:#cdcfd2;"></div>
<div style="left:100px;top:417.0px;width:685.5px;height:1px;background:#cdcfd2;"></div>
<div style="left:100px;top:432.0px;width:685.5px;height:1px;background:#cdcfd2;"></div>
<div style="left:100px;top:447.0px;width:685.5px;height:1px;background:#cdcfd2;"></div>
<div style="left:100px;top:462.0px;width:685.5px;height:1px;background:#cdcfd2;"></div>
<div style="left:100px;top:477.0px;width:685.5px;height:1px;background:#cdcfd2;"></div>
<div style="left:463px;top:250px;width:201.5px;height:1px;background:#cfd5de;"></div>
<div style="left:114.0px;top:231px;width:1px;height:51.5px;background:#a9adb3;"></div>
<div style="left:114.0px;top:282.5px;width:1px;height:197.5px;background:#cdcfd2;"></div>
<div style="left:138.5px;top:231px;width:1px;height:51.5px;background:#f3f6fb;"></div>
<div style="left:138.5px;top:282.5px;width:1px;height:197.5px;background:#cdcfd2;"></div>
<div style="left:186.0px;top:231px;width:1px;height:51.5px;background:#f3f6fb;"></div>
<div style="left:186.0px;top:282.5px;width:1px;height:197.5px;background:#cdcfd2;"></div>
<div style="left:264.0px;top:231px;width:1px;height:51.5px;background:#f3f6fb;"></div>
<div style="left:264.0px;top:282.5px;width:1px;height:197.5px;background:#cdcfd2;"></div>
<div style="left:367.5px;top:231px;width:1px;height:51.5px;background:#f3f6fb;"></div>
<div style="left:367.5px;top:282.5px;width:1px;height:197.5px;background:#cdcfd2;"></div>
<div style="left:463.0px;top:231px;width:1px;height:51.5px;background:#f3f6fb;"></div>
<div style="left:463.0px;top:282.5px;width:1px;height:197.5px;background:#cdcfd2;"></div>
<div style="left:469.0px;top:250px;width:1px;height:32.5px;background:#f3f6fb;"></div>
<div style="left:469.0px;top:282.5px;width:1px;height:197.5px;background:#cdcfd2;"></div>
<div style="left:503.5px;top:250px;width:1px;height:32.5px;background:#f3f6fb;"></div>
<div style="left:503.5px;top:282.5px;width:1px;height:197.5px;background:#cdcfd2;"></div>
<div style="left:549.5px;top:250px;width:1px;height:32.5px;background:#f3f6fb;"></div>
<div style="left:549.5px;top:282.5px;width:1px;height:197.5px;background:#cdcfd2;"></div>
<div style="left:664.0px;top:231px;width:1px;height:51.5px;background:#f3f6fb;"></div>
<div style="left:664.0px;top:282.5px;width:1px;height:197.5px;background:#cdcfd2;"></div>
<div style="left:705.5px;top:231px;width:1px;height:51.5px;background:#f3f6fb;"></div>
<div style="left:705.5px;top:282.5px;width:1px;height:197.5px;background:#cdcfd2;"></div>
<div style="left:785.0px;top:231px;width:1px;height:51.5px;background:#f3f6fb;"></div>
<div style="left:785.0px;top:282.5px;width:1px;height:197.5px;background:#cdcfd2;"></div>
<div style="left:124px;top:254px;width:6px;height:6px;background:#f2f2f2;border:1px solid #b2b2b2;"></div>
<span class="t" style="left:155px;top:248.95px;font-size:9.8px;line-height:14.7px;color:#333;transform:scaleX(0.7911);">操作</span>
<span class="t" style="left:218px;top:248.95px;font-size:9.8px;line-height:14.7px;color:#333;transform:scaleX(0.7911);">备注</span>
<span class="t" style="left:297px;top:248.95px;font-size:9.8px;line-height:14.7px;color:#333;transform:scaleX(0.7962);">用户订单号</span>
<span class="t" style="left:404px;top:248.95px;font-size:9.8px;line-height:14.7px;color:#333;transform:scaleX(0.7996);">运单号</span>
<span class="t" style="left:470.5px;top:260.45px;font-size:9.8px;line-height:14.7px;color:#333;transform:scaleX(0.7911);">定时派送</span>
<span class="t" style="left:511px;top:260.45px;font-size:9.8px;line-height:14.7px;color:#333;transform:scaleX(0.7911);">派送日期</span>
<span class="t" style="left:592px;top:260.45px;font-size:9.8px;line-height:14.7px;color:#333;transform:scaleX(0.8038);">派送时段</span>
<span class="t" style="left:670px;top:249.95px;font-size:9.8px;line-height:14.7px;color:#333;transform:scaleX(0.8038);">签收备注</span>
<span class="t" style="left:726px;top:249.95px;font-size:9.8px;line-height:14.7px;color:#333;transform:scaleX(0.7962);">打印批次号</span>
<span class="t" style="left:103.2px;top:283.1px;font-size:10px;line-height:15.0px;color:#222;transform:scaleX(0.7400);">1</span>
<svg style="left:110.8px;top:287.7px" width="2.6" height="5" viewBox="0 0 3 5"><path d="M0.3 0.3 L2.7 2.5 L0.3 4.7Z" fill="#8c98a8"/></svg>
<div style="left:124px;top:287px;width:6px;height:6px;background:#fff;border:1px solid #b2b2b2;"></div>
<span class="t" style="left:142px;top:283.05px;font-size:9.8px;line-height:14.7px;color:#3b93e6;transform:scaleX(0.8038);">通知揽收</span>
<svg style="left:176.8px;top:287.4px" width="6" height="6.2" viewBox="0 0 7 6.5" preserveAspectRatio="none"><path d="M0 0 H7 L3.5 6.5Z" fill="#2a8ae0"/></svg>
<span class="t" style="left:266px;top:282.67px;font-size:10.3px;line-height:15.45px;color:#222;transform:scaleX(0.7952);">GO6F2081708519306</span>
<span class="t" style="left:370px;top:282.67px;font-size:10.3px;line-height:15.45px;color:#222;transform:scaleX(0.8148);">990410101793165</span>
<span class="t" style="left:482px;top:283.72px;font-size:9.3px;line-height:13.95px;color:#222;transform:scaleX(0.8591);">否</span>
<span class="t" style="left:708px;top:282.67px;font-size:10.3px;line-height:15.45px;color:#222;transform:scaleX(0.8184);">0820163840669772</span>
<span class="t" style="left:103.2px;top:298.1px;font-size:10px;line-height:15.0px;color:#222;transform:scaleX(0.7400);">2</span>
<div style="left:124px;top:302px;width:6px;height:6px;background:#fff;border:1px solid #b2b2b2;"></div>
<span class="t" style="left:142px;top:298.05px;font-size:9.8px;line-height:14.7px;color:#3b93e6;transform:scaleX(0.8038);">通知揽收</span>
<svg style="left:176.8px;top:302.4px" width="6" height="6.2" viewBox="0 0 7 6.5" preserveAspectRatio="none"><path d="M0 0 H7 L3.5 6.5Z" fill="#2a8ae0"/></svg>
<span class="t" style="left:190.5px;top:298.05px;font-size:9.8px;line-height:14.7px;color:#222;transform:scaleX(0.7911);">文件</span>
<span class="t" style="left:266px;top:297.67px;font-size:10.3px;line-height:15.45px;color:#222;transform:scaleX(0.7952);">GO6F2081608506021</span>
<svg style="left:369.2px;top:300.8px" width="7.8" height="8.5" viewBox="0 0 8.4 9"><path d="M4.2 0.3 L8.1 3.3 L6.7 8.6 H1.7 L0.3 3.3Z" fill="#de1f1a" stroke="#c9140f" stroke-width="0.5" stroke-linejoin="round"/><path d="M4.2 2.6 L4.85 4.1 L6.4 4.2 L5.2 5.2 L5.6 6.8 L4.2 5.9 L2.8 6.8 L3.2 5.2 L2 4.2 L3.55 4.1Z" fill="#f7e38a"/></svg>
<div style="left:378.5px;top:300.09999999999997px;width:7.7px;height:9.7px;background:#e0261f;border-radius:50%;"></div>
<div style="left:381.8px;top:302.0px;width:1.2px;height:1.4px;background:#fff;"></div>
<div style="left:381.8px;top:304.2px;width:1.2px;height:4px;background:#fff;"></div>
<span class="t" style="left:387.5px;top:297.67px;font-size:10.3px;line-height:15.45px;color:#222;transform:scaleX(0.7990);">SF1612573047353</span>
<div style="left:463.5px;top:298.5px;width:5.5px;height:13px;overflow:hidden;"><span class="t" style="left:-4px;top:-0.5px;font-size:10.3px;line-height:14px;color:#222;transform:scaleX(.775);">主</span></div>
<span class="t" style="left:482px;top:298.72px;font-size:9.3px;line-height:13.95px;color:#222;transform:scaleX(0.8591);">否</span>
<span class="t" style="left:708px;top:297.67px;font-size:10.3px;line-height:15.45px;color:#222;transform:scaleX(0.8184);">0816134247308977</span>
<span class="t" style="left:103.2px;top:313.1px;font-size:10px;line-height:15.0px;color:#222;transform:scaleX(0.7400);">3</span>
<div style="left:124px;top:317px;width:6px;height:6px;background:#fff;border:1px solid #b2b2b2;"></div>
<span class="t" style="left:142px;top:313.05px;font-size:9.8px;line-height:14.7px;color:#3b93e6;transform:scaleX(0.8038);">通知揽收</span>
<svg style="left:176.8px;top:317.4px" width="6" height="6.2" viewBox="0 0 7 6.5" preserveAspectRatio="none"><path d="M0 0 H7 L3.5 6.5Z" fill="#2a8ae0"/></svg>
<span class="t" style="left:266px;top:312.67px;font-size:10.3px;line-height:15.45px;color:#222;transform:scaleX(0.8012);">GO6F2072008211575</span>
<svg style="left:369.2px;top:315.8px" width="7.8" height="8.5" viewBox="0 0 8.4 9"><path d="M4.2 0.3 L8.1 3.3 L6.7 8.6 H1.7 L0.3 3.3Z" fill="#de1f1a" stroke="#c9140f" stroke-width="0.5" stroke-linejoin="round"/><path d="M4.2 2.6 L4.85 4.1 L6.4 4.2 L5.2 5.2 L5.6 6.8 L4.2 5.9 L2.8 6.8 L3.2 5.2 L2 4.2 L3.55 4.1Z" fill="#f7e38a"/></svg>
<span class="t" style="left:379.5px;top:312.67px;font-size:10.3px;line-height:15.45px;color:#222;transform:scaleX(0.7990);">SF1369631486476</span>
<span class="t" style="left:482px;top:313.72px;font-size:9.3px;line-height:13.95px;color:#222;transform:scaleX(0.8591);">否</span>
<span class="t" style="left:103.2px;top:328.1px;font-size:10px;line-height:15.0px;color:#222;transform:scaleX(0.7400);">4</span>
<div style="left:124px;top:332px;width:6px;height:6px;background:#fff;border:1px solid #b2b2b2;"></div>
<span class="t" style="left:142px;top:328.05px;font-size:9.8px;line-height:14.7px;color:#3b93e6;transform:scaleX(0.8038);">通知揽收</span>
<svg style="left:176.8px;top:332.4px" width="6" height="6.2" viewBox="0 0 7 6.5" preserveAspectRatio="none"><path d="M0 0 H7 L3.5 6.5Z" fill="#2a8ae0"/></svg>
<span class="t" style="left:266px;top:327.67px;font-size:10.3px;line-height:15.45px;color:#222;transform:scaleX(0.7952);">GO6F2081608506013</span>
<svg style="left:369.2px;top:330.8px" width="7.8" height="8.5" viewBox="0 0 8.4 9"><path d="M4.2 0.3 L8.1 3.3 L6.7 8.6 H1.7 L0.3 3.3Z" fill="#de1f1a" stroke="#c9140f" stroke-width="0.5" stroke-linejoin="round"/><path d="M4.2 2.6 L4.85 4.1 L6.4 4.2 L5.2 5.2 L5.6 6.8 L4.2 5.9 L2.8 6.8 L3.2 5.2 L2 4.2 L3.55 4.1Z" fill="#f7e38a"/></svg>
<span class="t" style="left:379.5px;top:327.67px;font-size:10.3px;line-height:15.45px;color:#222;transform:scaleX(0.7990);">SF1610803036352</span>
<span class="t" style="left:482px;top:328.72px;font-size:9.3px;line-height:13.95px;color:#222;transform:scaleX(0.8591);">否</span>
<span class="t" style="left:708px;top:327.67px;font-size:10.3px;line-height:15.45px;color:#222;transform:scaleX(0.8184);">0816134254063487</span>
<span class="t" style="left:103.2px;top:343.1px;font-size:10px;line-height:15.0px;color:#222;transform:scaleX(0.7400);">5</span>
<div style="left:124px;top:347px;width:6px;height:6px;background:#fff;border:1px solid #b2b2b2;"></div>
<span class="t" style="left:142px;top:343.05px;font-size:9.8px;line-height:14.7px;color:#3b93e6;transform:scaleX(0.8038);">通知揽收</span>
<svg style="left:176.8px;top:347.4px" width="6" height="6.2" viewBox="0 0 7 6.5" preserveAspectRatio="none"><path d="M0 0 H7 L3.5 6.5Z" fill="#2a8ae0"/></svg>
<span class="t" style="left:266px;top:342.67px;font-size:10.3px;line-height:15.45px;color:#222;transform:scaleX(0.7952);">GO6F2081208489883</span>
<span class="t" style="left:370px;top:342.67px;font-size:10.3px;line-height:15.45px;color:#222;transform:scaleX(0.8060);">SF1386261179777</span>
<div style="left:463.5px;top:343.5px;width:5.5px;height:13px;overflow:hidden;"><span class="t" style="left:-4px;top:-0.5px;font-size:10.3px;line-height:14px;color:#222;transform:scaleX(.775);">主</span></div>
<span class="t" style="left:482px;top:343.72px;font-size:9.3px;line-height:13.95px;color:#222;transform:scaleX(0.8591);">否</span>
<span class="t" style="left:708px;top:342.67px;font-size:10.3px;line-height:15.45px;color:#222;transform:scaleX(0.8184);">0812173517987033</span>
<span class="t" style="left:103.2px;top:358.1px;font-size:10px;line-height:15.0px;color:#222;transform:scaleX(0.7400);">6</span>
<div style="left:124px;top:362px;width:6px;height:6px;background:#fff;border:1px solid #b2b2b2;"></div>
<span class="t" style="left:142px;top:358.05px;font-size:9.8px;line-height:14.7px;color:#3b93e6;transform:scaleX(0.8038);">通知揽收</span>
<svg style="left:176.8px;top:362.4px" width="6" height="6.2" viewBox="0 0 7 6.5" preserveAspectRatio="none"><path d="M0 0 H7 L3.5 6.5Z" fill="#2a8ae0"/></svg>
<span class="t" style="left:266px;top:357.67px;font-size:10.3px;line-height:15.45px;color:#222;transform:scaleX(0.7952);">GO6F2081508500295</span>
<svg style="left:369.2px;top:360.8px" width="7.8" height="8.5" viewBox="0 0 8.4 9"><path d="M4.2 0.3 L8.1 3.3 L6.7 8.6 H1.7 L0.3 3.3Z" fill="#de1f1a" stroke="#c9140f" stroke-width="0.5" stroke-linejoin="round"/><path d="M4.2 2.6 L4.85 4.1 L6.4 4.2 L5.2 5.2 L5.6 6.8 L4.2 5.9 L2.8 6.8 L3.2 5.2 L2 4.2 L3.55 4.1Z" fill="#f7e38a"/></svg>
<span class="t" style="left:379.5px;top:357.67px;font-size:10.3px;line-height:15.45px;color:#222;transform:scaleX(0.8060);">SF1611223035360</span>
<div style="left:463.5px;top:358.5px;width:5.5px;height:13px;overflow:hidden;"><span class="t" style="left:-4px;top:-0.5px;font-size:10.3px;line-height:14px;color:#222;transform:scaleX(.775);">主</span></div>
<span class="t" style="left:482px;top:358.72px;font-size:9.3px;line-height:13.95px;color:#222;transform:scaleX(0.8591);">否</span>
<span class="t" style="left:708px;top:357.67px;font-size:10.3px;line-height:15.45px;color:#222;transform:scaleX(0.8323);">0815111733174955</span>
<span class="t" style="left:103.2px;top:373.1px;font-size:10px;line-height:15.0px;color:#222;transform:scaleX(0.7400);">7</span>
<div style="left:124px;top:377px;width:6px;height:6px;background:#fff;border:1px solid #b2b2b2;"></div>
<span class="t" style="left:142px;top:373.05px;font-size:9.8px;line-height:14.7px;color:#3b93e6;transform:scaleX(0.8038);">通知揽收</span>
<svg style="left:176.8px;top:377.4px" width="6" height="6.2" viewBox="0 0 7 6.5" preserveAspectRatio="none"><path d="M0 0 H7 L3.5 6.5Z" fill="#2a8ae0"/></svg>
<span class="t" style="left:266px;top:372.67px;font-size:10.3px;line-height:15.45px;color:#222;transform:scaleX(0.7952);">GO6F2081508500735</span>
<svg style="left:369.2px;top:375.8px" width="7.8" height="8.5" viewBox="0 0 8.4 9"><path d="M4.2 0.3 L8.1 3.3 L6.7 8.6 H1.7 L0.3 3.3Z" fill="#de1f1a" stroke="#c9140f" stroke-width="0.5" stroke-linejoin="round"/><path d="M4.2 2.6 L4.85 4.1 L6.4 4.2 L5.2 5.2 L5.6 6.8 L4.2 5.9 L2.8 6.8 L3.2 5.2 L2 4.2 L3.55 4.1Z" fill="#f7e38a"/></svg>
<span class="t" style="left:379.5px;top:372.67px;font-size:10.3px;line-height:15.45px;color:#222;transform:scaleX(0.7990);">SF1667794278843</span>
<div style="left:463.5px;top:373.5px;width:5.5px;height:13px;overflow:hidden;"><span class="t" style="left:-4px;top:-0.5px;font-size:10.3px;line-height:14px;color:#222;transform:scaleX(.775);">主</span></div>
<span class="t" style="left:482px;top:373.72px;font-size:9.3px;line-height:13.95px;color:#222;transform:scaleX(0.8591);">否</span>
<span class="t" style="left:708px;top:372.67px;font-size:10.3px;line-height:15.45px;color:#222;transform:scaleX(0.8253);">0815115532227285</span>
<span class="t" style="left:103.2px;top:388.1px;font-size:10px;line-height:15.0px;color:#222;transform:scaleX(0.7400);">8</span>
<div style="left:124px;top:392px;width:6px;height:6px;background:#fff;border:1px solid #b2b2b2;"></div>
<span class="t" style="left:142px;top:388.05px;font-size:9.8px;line-height:14.7px;color:#3b93e6;transform:scaleX(0.8038);">通知揽收</span>
<svg style="left:176.8px;top:392.4px" width="6" height="6.2" viewBox="0 0 7 6.5" preserveAspectRatio="none"><path d="M0 0 H7 L3.5 6.5Z" fill="#2a8ae0"/></svg>
<span class="t" style="left:266px;top:387.67px;font-size:10.3px;line-height:15.45px;color:#222;transform:scaleX(0.7952);">GO6F2081508500722</span>
<svg style="left:369.2px;top:390.8px" width="7.8" height="8.5" viewBox="0 0 8.4 9"><path d="M4.2 0.3 L8.1 3.3 L6.7 8.6 H1.7 L0.3 3.3Z" fill="#de1f1a" stroke="#c9140f" stroke-width="0.5" stroke-linejoin="round"/><path d="M4.2 2.6 L4.85 4.1 L6.4 4.2 L5.2 5.2 L5.6 6.8 L4.2 5.9 L2.8 6.8 L3.2 5.2 L2 4.2 L3.55 4.1Z" fill="#f7e38a"/></svg>
<span class="t" style="left:379.5px;top:387.67px;font-size:10.3px;line-height:15.45px;color:#222;transform:scaleX(0.7990);">SF1697186778376</span>
<div style="left:463.5px;top:388.5px;width:5.5px;height:13px;overflow:hidden;"><span class="t" style="left:-4px;top:-0.5px;font-size:10.3px;line-height:14px;color:#222;transform:scaleX(.775);">主</span></div>
<span class="t" style="left:482px;top:388.72px;font-size:9.3px;line-height:13.95px;color:#222;transform:scaleX(0.8591);">否</span>
<span class="t" style="left:708px;top:387.67px;font-size:10.3px;line-height:15.45px;color:#222;transform:scaleX(0.8323);">0815115506709117</span>
<span class="t" style="left:103.2px;top:403.1px;font-size:10px;line-height:15.0px;color:#222;transform:scaleX(0.7400);">9</span>
<div style="left:124px;top:407px;width:6px;height:6px;background:#fff;border:1px solid #b2b2b2;"></div>
<span class="t" style="left:142px;top:403.05px;font-size:9.8px;line-height:14.7px;color:#3b93e6;transform:scaleX(0.8038);">通知揽收</span>
<svg style="left:176.8px;top:407.4px" width="6" height="6.2" viewBox="0 0 7 6.5" preserveAspectRatio="none"><path d="M0 0 H7 L3.5 6.5Z" fill="#2a8ae0"/></svg>
<span class="t" style="left:266px;top:402.67px;font-size:10.3px;line-height:15.45px;color:#222;transform:scaleX(0.7952);">GO6F2081508500718</span>
<svg style="left:369.2px;top:405.8px" width="7.8" height="8.5" viewBox="0 0 8.4 9"><path d="M4.2 0.3 L8.1 3.3 L6.7 8.6 H1.7 L0.3 3.3Z" fill="#de1f1a" stroke="#c9140f" stroke-width="0.5" stroke-linejoin="round"/><path d="M4.2 2.6 L4.85 4.1 L6.4 4.2 L5.2 5.2 L5.6 6.8 L4.2 5.9 L2.8 6.8 L3.2 5.2 L2 4.2 L3.55 4.1Z" fill="#f7e38a"/></svg>
<span class="t" style="left:379.5px;top:402.67px;font-size:10.3px;line-height:15.45px;color:#222;transform:scaleX(0.7990);">SF1667773276147</span>
<div style="left:463.5px;top:403.5px;width:5.5px;height:13px;overflow:hidden;"><span class="t" style="left:-4px;top:-0.5px;font-size:10.3px;line-height:14px;color:#222;transform:scaleX(.775);">主</span></div>
<span class="t" style="left:482px;top:403.72px;font-size:9.3px;line-height:13.95px;color:#222;transform:scaleX(0.8591);">否</span>
<span class="t" style="left:708px;top:402.67px;font-size:10.3px;line-height:15.45px;color:#222;transform:scaleX(0.8253);">0815115432054391</span>
<span class="t" style="left:101.3px;top:418.1px;font-size:10px;line-height:15.0px;color:#222;transform:scaleX(0.7400);">10</span>
<div style="left:124px;top:422px;width:6px;height:6px;background:#fff;border:1px solid #b2b2b2;"></div>
<span class="t" style="left:142px;top:418.05px;font-size:9.8px;line-height:14.7px;color:#3b93e6;transform:scaleX(0.8038);">通知揽收</span>
<svg style="left:176.8px;top:422.4px" width="6" height="6.2" viewBox="0 0 7 6.5" preserveAspectRatio="none"><path d="M0 0 H7 L3.5 6.5Z" fill="#2a8ae0"/></svg>
<span class="t" style="left:266px;top:417.67px;font-size:10.3px;line-height:15.45px;color:#222;transform:scaleX(0.7952);">GO6F2081508500708</span>
<svg style="left:369.2px;top:420.8px" width="7.8" height="8.5" viewBox="0 0 8.4 9"><path d="M4.2 0.3 L8.1 3.3 L6.7 8.6 H1.7 L0.3 3.3Z" fill="#de1f1a" stroke="#c9140f" stroke-width="0.5" stroke-linejoin="round"/><path d="M4.2 2.6 L4.85 4.1 L6.4 4.2 L5.2 5.2 L5.6 6.8 L4.2 5.9 L2.8 6.8 L3.2 5.2 L2 4.2 L3.55 4.1Z" fill="#f7e38a"/></svg>
<span class="t" style="left:379.5px;top:417.67px;font-size:10.3px;line-height:15.45px;color:#222;transform:scaleX(0.7990);">SF1600035658908</span>
<div style="left:463.5px;top:418.5px;width:5.5px;height:13px;overflow:hidden;"><span class="t" style="left:-4px;top:-0.5px;font-size:10.3px;line-height:14px;color:#222;transform:scaleX(.775);">主</span></div>
<span class="t" style="left:482px;top:418.72px;font-size:9.3px;line-height:13.95px;color:#222;transform:scaleX(0.8591);">否</span>
<span class="t" style="left:708px;top:417.67px;font-size:10.3px;line-height:15.45px;color:#222;transform:scaleX(0.8253);">0815115046823954</span>
<span class="t" style="left:101.3px;top:433.1px;font-size:10px;line-height:15.0px;color:#222;transform:scaleX(0.7400);">11</span>
<div style="left:124px;top:437px;width:6px;height:6px;background:#fff;border:1px solid #b2b2b2;"></div>
<span class="t" style="left:142px;top:433.05px;font-size:9.8px;line-height:14.7px;color:#3b93e6;transform:scaleX(0.8038);">通知揽收</span>
<svg style="left:176.8px;top:437.4px" width="6" height="6.2" viewBox="0 0 7 6.5" preserveAspectRatio="none"><path d="M0 0 H7 L3.5 6.5Z" fill="#2a8ae0"/></svg>
<span class="t" style="left:266px;top:432.67px;font-size:10.3px;line-height:15.45px;color:#222;transform:scaleX(0.7952);">GO6F2081508499882</span>
<svg style="left:369.2px;top:435.8px" width="7.8" height="8.5" viewBox="0 0 8.4 9"><path d="M4.2 0.3 L8.1 3.3 L6.7 8.6 H1.7 L0.3 3.3Z" fill="#de1f1a" stroke="#c9140f" stroke-width="0.5" stroke-linejoin="round"/><path d="M4.2 2.6 L4.85 4.1 L6.4 4.2 L5.2 5.2 L5.6 6.8 L4.2 5.9 L2.8 6.8 L3.2 5.2 L2 4.2 L3.55 4.1Z" fill="#f7e38a"/></svg>
<span class="t" style="left:379.5px;top:432.67px;font-size:10.3px;line-height:15.45px;color:#222;transform:scaleX(0.7990);">SF1639775567650</span>
<div style="left:463.5px;top:433.5px;width:5.5px;height:13px;overflow:hidden;"><span class="t" style="left:-4px;top:-0.5px;font-size:10.3px;line-height:14px;color:#222;transform:scaleX(.775);">主</span></div>
<span class="t" style="left:482px;top:433.72px;font-size:9.3px;line-height:13.95px;color:#222;transform:scaleX(0.8591);">否</span>
<span class="t" style="left:708px;top:432.67px;font-size:10.3px;line-height:15.45px;color:#222;transform:scaleX(0.8184);">0815102302531592</span>
<span class="t" style="left:101.3px;top:448.1px;font-size:10px;line-height:15.0px;color:#222;transform:scaleX(0.7400);">12</span>
<div style="left:124px;top:452px;width:6px;height:6px;background:#fff;border:1px solid #b2b2b2;"></div>
<span class="t" style="left:142px;top:448.05px;font-size:9.8px;line-height:14.7px;color:#3b93e6;transform:scaleX(0.8038);">通知揽收</span>
<svg style="left:176.8px;top:452.4px" width="6" height="6.2" viewBox="0 0 7 6.5" preserveAspectRatio="none"><path d="M0 0 H7 L3.5 6.5Z" fill="#2a8ae0"/></svg>
<span class="t" style="left:266px;top:447.67px;font-size:10.3px;line-height:15.45px;color:#222;transform:scaleX(0.7952);">GO6F2081508500268</span>
<svg style="left:369.2px;top:450.8px" width="7.8" height="8.5" viewBox="0 0 8.4 9"><path d="M4.2 0.3 L8.1 3.3 L6.7 8.6 H1.7 L0.3 3.3Z" fill="#de1f1a" stroke="#c9140f" stroke-width="0.5" stroke-linejoin="round"/><path d="M4.2 2.6 L4.85 4.1 L6.4 4.2 L5.2 5.2 L5.6 6.8 L4.2 5.9 L2.8 6.8 L3.2 5.2 L2 4.2 L3.55 4.1Z" fill="#f7e38a"/></svg>
<span class="t" style="left:379.5px;top:447.67px;font-size:10.3px;line-height:15.45px;color:#222;transform:scaleX(0.7990);">SF1646325492597</span>
<span class="t" style="left:482px;top:448.72px;font-size:9.3px;line-height:13.95px;color:#222;transform:scaleX(0.8591);">否</span>
<span class="t" style="left:708px;top:447.67px;font-size:10.3px;line-height:15.45px;color:#222;transform:scaleX(0.8323);">0815111551505214</span>
<span class="t" style="left:101.3px;top:463.1px;font-size:10px;line-height:15.0px;color:#222;transform:scaleX(0.7400);">13</span>
<div style="left:124px;top:467px;width:6px;height:6px;background:#fff;border:1px solid #b2b2b2;"></div>
<span class="t" style="left:142px;top:463.05px;font-size:9.8px;line-height:14.7px;color:#3b93e6;transform:scaleX(0.8038);">通知揽收</span>
<svg style="left:176.8px;top:467.4px" width="6" height="6.2" viewBox="0 0 7 6.5" preserveAspectRatio="none"><path d="M0 0 H7 L3.5 6.5Z" fill="#2a8ae0"/></svg>
<span class="t" style="left:266px;top:462.67px;font-size:10.3px;line-height:15.45px;color:#222;transform:scaleX(0.7952);">GO6F2081508500286</span>
<svg style="left:369.2px;top:465.8px" width="7.8" height="8.5" viewBox="0 0 8.4 9"><path d="M4.2 0.3 L8.1 3.3 L6.7 8.6 H1.7 L0.3 3.3Z" fill="#de1f1a" stroke="#c9140f" stroke-width="0.5" stroke-linejoin="round"/><path d="M4.2 2.6 L4.85 4.1 L6.4 4.2 L5.2 5.2 L5.6 6.8 L4.2 5.9 L2.8 6.8 L3.2 5.2 L2 4.2 L3.55 4.1Z" fill="#f7e38a"/></svg>
<span class="t" style="left:379.5px;top:462.67px;font-size:10.3px;line-height:15.45px;color:#222;transform:scaleX(0.8132);">SF1671118326928</span>
<span class="t" style="left:482px;top:463.72px;font-size:9.3px;line-height:13.95px;color:#222;transform:scaleX(0.8591);">否</span>
<div style="left:463.5px;top:260px;width:5.5px;height:14px;overflow:hidden;"><span class="t" style="left:-4px;top:0px;font-size:10.3px;line-height:14px;color:#333;transform:scaleX(.775);">主</span></div>
<div style="left:786px;top:231px;width:8px;height:254px;background:#f6f6f6;"></div>
<div style="left:786px;top:485px;width:8px;height:9px;background:#e6e6e6;"></div>
<svg style="left:787.3px;top:234.8px" width="4.6" height="3.6" viewBox="0 0 5 4"><path d="M2.5 0.3 L5 3.8 H0Z" fill="#222"/></svg>
<div style="left:787.5px;top:242.5px;width:4.5px;height:100.3px;background:#adadad;"></div>
<div style="left:100px;top:485px;width:686px;height:9px;background:#fdfdfd;"></div>
<svg style="left:102.5px;top:486px" width="3" height="5" viewBox="0 0 3 5"><path d="M2.8 0.2 V4.8 L0.2 2.5Z" fill="#222"/></svg>
<div style="left:688.6px;top:485.3px;width:86.8px;height:5.6px;background:#c4c4c4;"></div>
<svg style="left:779.6px;top:485.6px" width="3" height="5" viewBox="0 0 3 5"><path d="M0.2 0.2 V4.8 L2.8 2.5Z" fill="#222"/></svg>
<div style="left:693.5px;top:465.5px;width:106.5px;height:14.5px;background:#fff;border-top:1px solid #e6e9ee;border-bottom:1px solid #e6e9ee;"></div>
<svg style="left:692.5px;top:463px" width="15" height="18" viewBox="0 0 15 18"><path d="M3 2.6 L12 0.7 Q13.9 0.4 14 2.2 L14.5 13.4 Q14.5 15 13 15.4 L4.6 17.3 Q2.8 17.6 2.6 16 L1 4.8 Q0.9 3.1 3 2.6Z" fill="#f4561e"/><path d="M11.2 4.4 L5.6 5.4 Q4.6 5.6 4.7 6.6 L4.9 8 Q5 8.9 6 8.8 L9.6 8.4 Q11 8.4 11.1 9.8 L11.2 11 Q11.2 12.4 9.8 12.7 L4.6 13.6" fill="none" stroke="#fff" stroke-width="2"/></svg>
<span class="t" style="left:710.2px;top:464.73px;font-size:10.5px;line-height:15.75px;color:#2273d6;font-weight:700;transform:scaleX(0.7429);">中</span>
<div style="left:722.3px;top:470px;width:2.3px;height:2.2px;background:#2273d6;border-radius:50%;"></div>
<svg style="left:725.8px;top:471.2px" width="3" height="5.2" viewBox="0 0 3 5.2"><path d="M0.6 0.2 H2.8 V2.4 Q2.6 4.4 0.6 5 L0.3 4.2 Q1.4 3.6 1.4 2.4 H0.6Z" fill="#2273d6"/></svg>
<svg style="left:732.5px;top:467.8px" width="9.4" height="10" viewBox="0 0 9.4 10"><ellipse cx="4.7" cy="5" rx="4.1" ry="4.4" fill="none" stroke="#2273d6" stroke-width="1"/><path d="M3 6.4 Q4.7 8 6.4 6.4" fill="none" stroke="#2273d6" stroke-width="0.8"/><path d="M2.4 3.6 H4.2 M5.2 3.6 H7" stroke="#2273d6" stroke-width="0.9"/></svg>
<svg style="left:745.4px;top:467.6px" width="6.6" height="10.2" viewBox="0 0 6.6 10.2"><rect x="1.8" y="0.2" width="3" height="5.8" rx="1.5" fill="#2273d6"/><path d="M0.5 4.2 Q0.5 7.6 3.3 7.6 Q6.1 7.6 6.1 4.2 M3.3 7.6 V9.6 M1.6 9.7 H5" fill="none" stroke="#2273d6" stroke-width="1"/></svg>
<svg style="left:755.8px;top:469.3px" width="8.8" height="7.4" viewBox="0 0 8.8 7.4"><rect x="0.2" y="0.2" width="8.4" height="7" rx="0.8" fill="#2273d6"/><path d="M1.4 2.2 H7.4 M1.4 3.7 H7.4" stroke="#fff" stroke-width="0.8" stroke-dasharray="1 0.6"/><path d="M2.4 5.4 H6.4" stroke="#fff" stroke-width="0.8"/></svg>
<svg style="left:768.3px;top:468px" width="9" height="9.6" viewBox="0 0 9 9.6"><circle cx="3.8" cy="2.1" r="1.9" fill="#bcc5d0"/><path d="M0.4 9.4 V6.4 Q0.4 4.4 3.8 4.4 Q7.2 4.4 7.2 6.4 V9.4Z" fill="#bcc5d0"/><rect x="3.6" y="6.2" width="5" height="3.1" fill="#e4e9ef" stroke="#bcc5d0" stroke-width="0.5"/></svg>
<svg style="left:779.4px;top:469px" width="7.6" height="8.4" viewBox="0 0 10 9" preserveAspectRatio="none"><path d="M3 0.3 Q5 1.8 7 0.3 L9.8 2.4 L8.4 4.2 L7.6 3.6 V8.7 H2.4 V3.6 L1.6 4.2 L0.2 2.4Z" fill="#2273d6"/></svg>
<svg style="left:791px;top:469.4px" width="9" height="8" viewBox="0 0 9 8"><rect x="0.2" y="0.2" width="3.4" height="3.2" fill="#2273d6"/><rect x="4.8" y="0.2" width="3.4" height="3.2" fill="#2273d6"/><rect x="0.2" y="4.6" width="3.4" height="3.2" fill="#2273d6"/><rect x="4.8" y="4.6" width="3.4" height="3.2" fill="#2273d6"/></svg>
<span class="t" style="left:105px;top:506.85px;font-size:9.8px;line-height:14.7px;color:#222;transform:scaleX(0.8040);">每页<span style="position:static;font-size:1.07em">500</span>条,共<span style="position:static;font-size:1.07em">17</span>条</span>
<div style="left:537px;top:505.2px;width:31px;height:16.6px;background:#3a9bd5;border-radius:1.5px;"></div>
<span class="t" style="left:545px;top:506.5px;font-size:9.6px;line-height:14.4px;color:#fff;transform:scaleX(0.7818);">首页</span>
<div style="left:574px;top:505.2px;width:30.5px;height:16.6px;background:#3a9bd5;border-radius:1.5px;"></div>
<span class="t" style="left:579px;top:506.5px;font-size:9.6px;line-height:14.4px;color:#fff;transform:scaleX(0.7123);">上一页</span>
<div style="left:646px;top:505.2px;width:31px;height:16.6px;background:#3a9bd5;border-radius:1.5px;"></div>
<span class="t" style="left:651px;top:506.5px;font-size:9.6px;line-height:14.4px;color:#fff;transform:scaleX(0.7296);">下一页</span>
<div style="left:683px;top:505.2px;width:31px;height:16.6px;background:#3a9bd5;border-radius:1.5px;"></div>
<span class="t" style="left:691px;top:506.5px;font-size:9.6px;line-height:14.4px;color:#fff;transform:scaleX(0.7818);">末页</span>
<div class="in" style="left:609.5px;top:504px;width:18.0px;height:19.5px;"></div>
<span class="t" style="left:611.5px;top:504.77px;font-size:10.3px;line-height:15.45px;color:#222;transform:scaleX(0.8000);">1</span>
<span class="t" style="left:631px;top:506.27px;font-size:10.3px;line-height:15.45px;color:#222;transform:scaleX(0.9604);">/ 1</span>
<div class="in" style="left:718px;top:504px;width:76px;height:18px;"></div>
<span class="t" style="left:720.7px;top:505.85px;font-size:9.8px;line-height:14.7px;color:#222;transform:scaleX(0.8133);">显示<span style="position:static;font-size:1.07em">500</span>条/页</span>
<svg style="left:787.0px;top:511.9px" width="4.5" height="2.8" viewBox="0 0 5 3"><path d="M0.2 0 H4.8 L2.5 3Z" fill="#111" stroke="#111" stroke-width="0.4" stroke-linejoin="round"/></svg>
<div style="left:0px;top:529.5px;width:94.2px;height:2px;background:#6e6e6e;"></div>
<div style="left:94px;top:530px;width:706px;height:1px;background:#9a9a9a;"></div>
<div style="left:0px;top:531px;width:800px;height:2px;background:#1c1c1c;"></div>
<div style="left:-1.2px;top:58.9px;width:99px;height:45.5px;border:2.3px solid #fb1712;border-radius:3.5px;"></div>
<div style="left:245.7px;top:22.7px;width:62.4px;height:43.9px;border:2.2px solid #fb1712;border-radius:2.8px;"></div>
<div style="left:696.8px;top:231.5px;width:96.4px;height:252.8px;border:2.1px solid #fb1712;border-radius:3px;"></div>
</div></body></html>
